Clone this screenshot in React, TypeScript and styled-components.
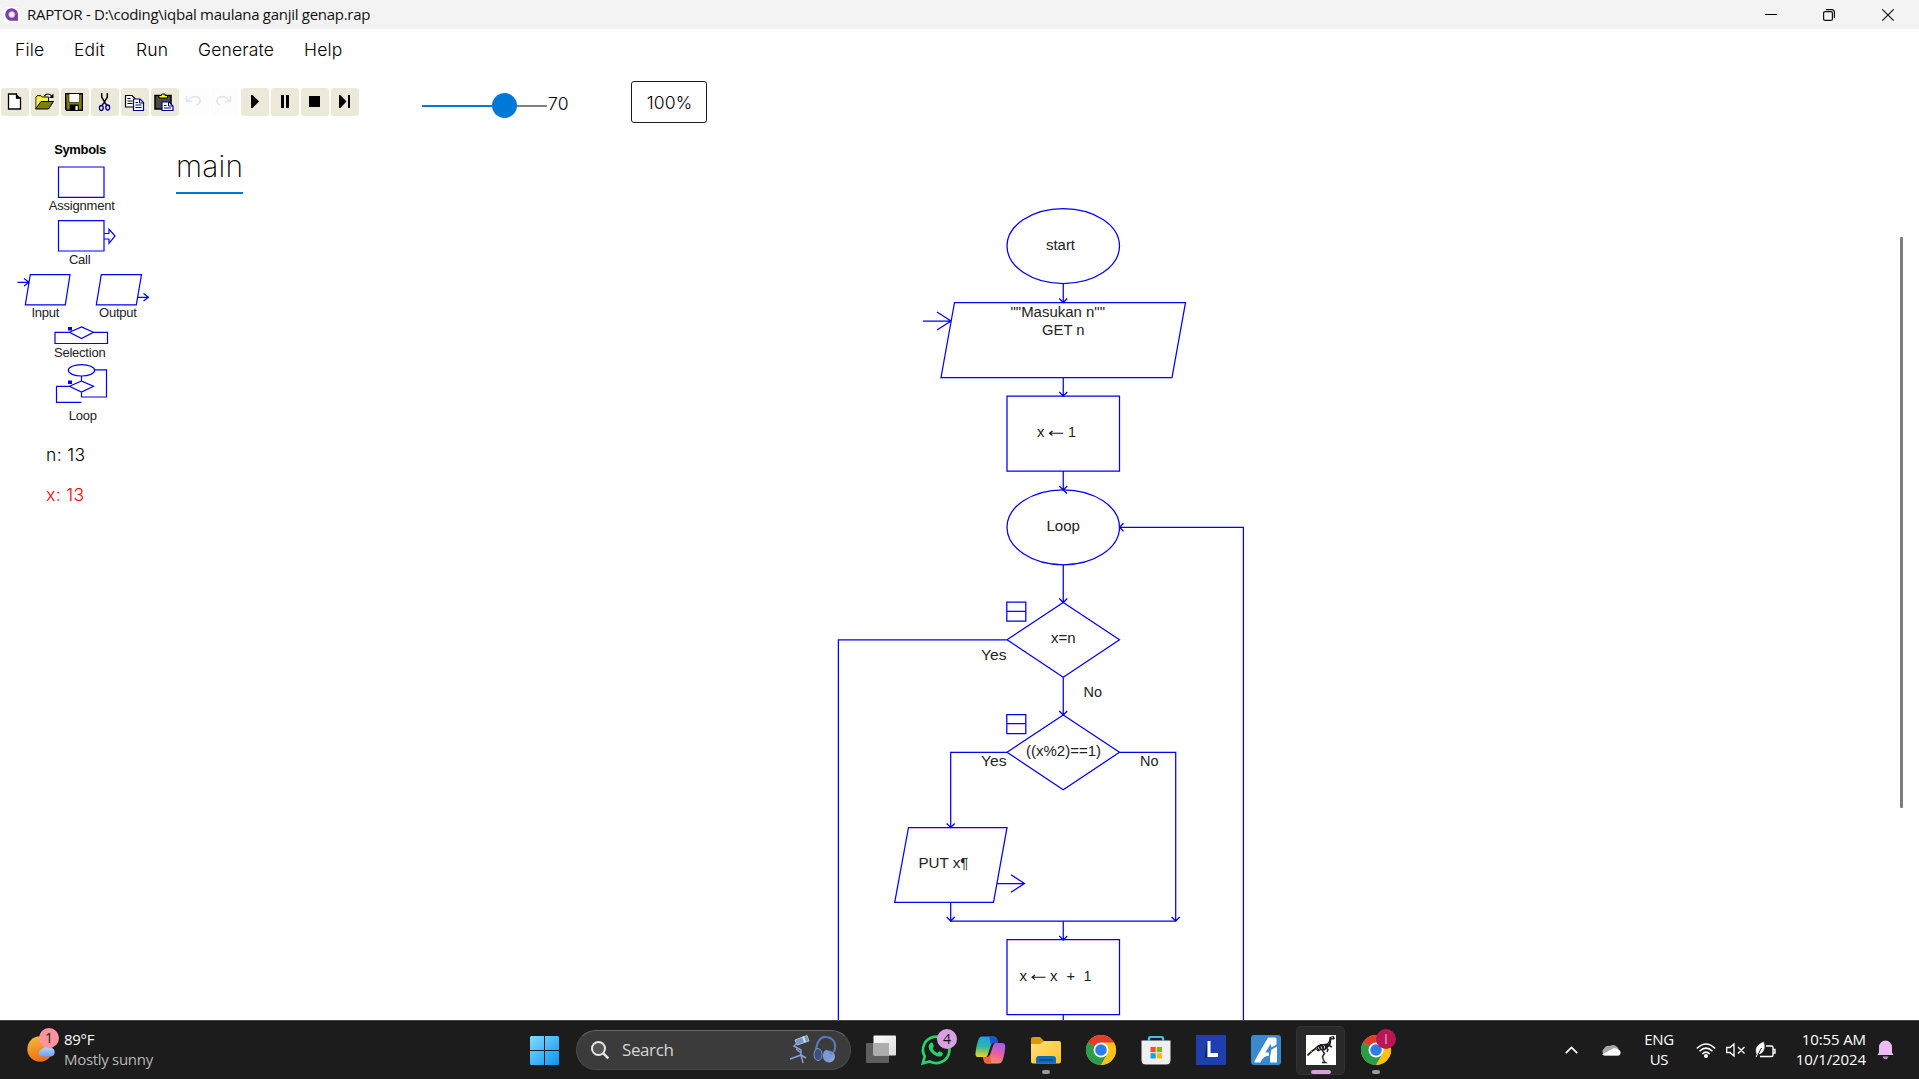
import React from "react";
import styled, { createGlobalStyle } from "styled-components";

const UI = '"Open Sans", "Noto Sans", sans-serif';
const INTER = 'Inter, "Noto Sans", sans-serif';
const ARIAL = '"Liberation Sans", Arial, sans-serif';
const INK = "#0000f5";

const Global = createGlobalStyle`
  html, body { margin: 0; padding: 0; background: #fff; overflow: hidden; }
  * { box-sizing: border-box; }
  svg { display: block; flex: none; overflow: visible; }
`;

const Screen = styled.div`
  display: flex;
  flex-direction: column;
  width: 1919px;
  height: 1079px;
  overflow: hidden;
  background: #fff;
`;

/* ---------- window chrome ---------- */
const TitleBar = styled.header`
  display: flex;
  align-items: center;
  height: 29px;
  flex: none;
  padding: 0 2px 0 4px;
  background: #f3f3f3;
`;
const TitleText = styled.span`
  margin-left: 7px;
  flex: 1;
  font: 15px/28px ${UI};
  height: 29px;
  letter-spacing: -0.28px;
  color: #111;
  white-space: pre;
`;
const CaptionButton = styled.span`
  display: flex;
  align-items: center;
  justify-content: center;
  width: 58.5px;
  height: 28px;
`;
const MenuBar = styled.nav`
  display: flex;
  height: 43px;
  flex: none;
`;
const MenuItem = styled.span<{ $w: number }>`
  width: ${(p) => p.$w}px;
  padding-left: 15px;
  font: 300 17.5px/42px ${INTER};
  letter-spacing: 0.18px;
  color: #000;
`;

/* ---------- toolbar ---------- */
const ToolBar = styled.div`
  display: flex;
  align-items: center;
  height: 60px;
  flex: none;
  padding-left: 1px;
`;
const Tools = styled.div`
  display: flex;
  gap: 2px;
`;
const ToolButton = styled.span<{ $off?: boolean }>`
  width: 28px;
  height: 28px;
  border-radius: 3px;
  background: ${(p) => (p.$off ? "#fdfdfd" : "#ece9d8")};
`;
const Slider = styled.div`
  display: flex;
  align-items: center;
  margin: 7px 0 0 63px;
  height: 25px;
`;
const Track = styled.i<{ $w: number; $c: string }>`
  width: ${(p) => p.$w}px;
  height: 2px;
  background: ${(p) => p.$c};
`;
const Thumb = styled.i`
  width: 25px;
  height: 25px;
  border-radius: 50%;
  background: #0078d7;
`;
const SpeedValue = styled.span`
  width: 84px;
  padding-left: 1px;
  font: 300 17.5px/24px ${INTER};
  letter-spacing: 0.2px;
  color: #000;
  margin-top: 3px;
`;
const ZoomButton = styled.span`
  width: 76px;
  height: 42px;
  border: 1px solid #1a1a1a;
  border-radius: 3px;
  text-align: center;
  font: 300 17.5px/41px ${INTER};
  letter-spacing: 0.1px;
  padding-left: 1px;
  color: #000;
`;

/* ---------- work area ---------- */
const Work = styled.div`
  display: flex;
  flex: 1;
  min-height: 0;
`;
const Side = styled.aside`
  display: flex;
  flex-direction: column;
  width: 160px;
  padding-top: 11px;
  flex: none;
`;
const PaletteTitle = styled.div`
  height: 14px;
  width: 160px;
  text-align: center;
  font: bold 13px/14px ${ARIAL};
  letter-spacing: -0.35px;
  color: #000;
`;
const Caption = styled.span<{ $c: number }>`
  display: block;
  width: ${(p) => p.$c * 2}px;
  text-align: center;
  font: 13px/14px ${ARIAL};
  letter-spacing: -0.22px;
  color: #222;
`;
const PairCaptions = styled.div`
  display: flex;
`;
const Variable = styled.div<{ $hot?: boolean }>`
  padding-left: 46px;
  height: 40px;
  font: 300 17.5px/40px ${INTER};
  letter-spacing: 0.35px;
  color: ${(p) => (p.$hot ? "#f00" : "#000")};
`;
const Watch = styled.div`
  margin-top: 12px;
`;
const Editor = styled.main`
  display: flex;
  flex-direction: column;
  flex: 1;
`;
const Tabs = styled.div`
  display: flex;
  height: 63px;
  padding: 9px 0 0 16px;
`;
const Tab = styled.span`
  height: 53px;
  width: 67px;
  border-bottom: 2px solid #0078d7;
  font: 200 30px/50px ${INTER};
  letter-spacing: 0.2px;
  color: #000;
`;
const CanvasRow = styled.div`
  display: flex;
  flex: 1;
  min-height: 0;
  overflow: hidden;
`;
const ScrollThumb = styled.i`
  width: 2.5px;
  height: 571px;
  margin-top: 42px;
  border-radius: 1px;
  background: #7d7d7d;
`;

/* ---------- taskbar ---------- */
const TaskBar = styled.footer`
  display: flex;
  align-items: center;
  height: 59px;
  flex: none;
  border-top: 1px solid #474747;
  background: #1c1c1c;
  color: #fff;
`;
const Weather = styled.div`
  display: flex;
  width: 517px;
  padding-left: 26px;
  gap: 6px;
`;
const Lines = styled.div<{ $align?: string; $ls?: number; $w?: number }>`
  font: 15px/20px ${UI};
  height: 42px;
  letter-spacing: ${(p) => p.$ls ?? 0}px;
  text-align: ${(p) => p.$align ?? "left"};
  width: ${(p) => (p.$w ? `${p.$w}px` : "auto")};
  white-space: nowrap;
`;
const Muted = styled.div`
  color: #b8b8b8;
`;
const StartCell = styled.span`
  display: flex;
  justify-content: center;
  width: 55px;
`;
const Search = styled.div`
  display: flex;
  align-items: center;
  width: 275px;
  height: 40px;
  margin: 0 2px 0 4px;
  padding-left: 14px;
  border-radius: 20px;
  border: 1px solid #4a4a4a;
  border-top-color: #666;
  background: #3b3b3b;
`;
const SearchText = styled.span`
  flex: 1;
  margin-left: 13px;
  font: 17px/38px ${UI};
  letter-spacing: -0.4px;
  color: #d6d6d6;
`;
const TaskIcon = styled.span<{ $active?: boolean }>`
  position: relative;
  display: flex;
  align-items: center;
  justify-content: center;
  width: 49px;
  height: 49px;
  margin: 0 3px;
  border-radius: 5px;
  border: 1px solid ${(p) => (p.$active ? "#323232" : "transparent")};
  background: ${(p) => (p.$active ? "#292929" : "transparent")};
`;
const Running = styled.i<{ $wide?: boolean }>`
  position: absolute;
  bottom: 0;
  left: ${(p) => (p.$wide ? 14 : 19.5)}px;
  width: ${(p) => (p.$wide ? 20 : 8)}px;
  height: 4px;
  border-radius: 2px;
  background: ${(p) => (p.$wide ? "#d99fe0" : "#9a9a9a")};
`;
const Badge = styled.i<{ $bg: string; $fg: string; $x: number; $y: number }>`
  position: absolute;
  left: ${(p) => p.$x}px;
  top: ${(p) => p.$y}px;
  width: 20px;
  height: 20px;
  border-radius: 50%;
  background: ${(p) => p.$bg};
  color: ${(p) => p.$fg};
  font: normal 14px/20px ${UI};
  text-align: center;
`;
const WeatherIcon = styled.div`
  position: relative;
  width: 32px;
  height: 40px;
`;
const Tray = styled.div`
  display: flex;
  align-items: center;
  margin-left: auto;
  padding-right: 14px;
`;
const TrayItem = styled.span<{ $w: number }>`
  display: flex;
  justify-content: center;
  width: ${(p) => p.$w}px;
`;

/* Toolbar glyphs, each on a 28x28 grid. */
const toolIcons: { off?: boolean; art: React.ReactNode }[] = [
  {
    art: (
      <>
        <path d="M7.500 6h8v4h4v11h-12z" fill="#fff" stroke="#000" strokeWidth="1.300" />
        <path d="M15 5.500l5 5h-5z" fill="#000" />
      </>
    ),
  },
  {
    art: (
      <>
        <path d="M5 20V9l1.300-1.300h3.700L11.300 9H17.500v4.500" fill="#ff0" stroke="#000" />
        <path d="M5.500 9.500h5.500v1h6v3h-6l-5.500 6z" fill="#f2ee5c" />
        <path d="M4.500 21l5.500-7.500H22.500L17.500 21z" fill="#808000" stroke="#000" />
        <path d="M13.500 8q1-2 3.500-2t4 2.500" fill="none" stroke="#000" strokeWidth="1.200" />
        <path d="M22.500 5.500v4.500h-4.500z" fill="#000" />
      </>
    ),
  },
  {
    art: (
      <>
        <path d="M4 5h18v18H5.500L4 21.500z" fill="#000" />
        <path d="M5.300 6.500h2.400V15h10.500V6.500h2.500v15h-3v-5h-9v5h-3z" fill="#808000" />
        <rect x="8.300" y="6" width="9.700" height="8.300" fill="#fff" />
        <rect x="14.500" y="18" width="2.200" height="4" fill="#fff" />
      </>
    ),
  },
  {
    art: (
      <>
        <path d="M10.700 5v4l4 7M16.300 5v4l-4 7" fill="none" stroke="#000" strokeWidth="1.500" />
        <path d="M12.500 15.500l-1.500 2M14.500 15.500l1.500 2" stroke="#000080" strokeWidth="1.300" />
        <ellipse cx="10.300" cy="20" rx="1.900" ry="2.500" fill="none" stroke="#000080" strokeWidth="1.300" />
        <ellipse cx="16.700" cy="19.500" rx="1.900" ry="2.500" fill="none" stroke="#000080" strokeWidth="1.300" />
      </>
    ),
  },
  {
    art: (
      <>
        <path d="M4.500 7.500h6.500l3 3v8.500H4.500z" fill="#fff" stroke="#000" strokeWidth="1.200" />
        <path d="M6.500 10.500h3M6.500 13h5M6.500 15.500h5" stroke="#000" />
        <path d="M12.500 11h6.500l3.500 3.500v8H12.500z" fill="#fff" stroke="#000080" strokeWidth="1.200" />
        <path d="M18.500 11v4h4M14.500 14.500h2.500M14.500 17h6M14.500 19.500h6" fill="none" stroke="#000080" />
      </>
    ),
  },
  {
    art: (
      <>
        <path d="M4 7.500h16V21h-16z" fill="#4c4c40" stroke="#000" strokeWidth="1.500" />
        <path d="M8 10V7.500h2.500V6h3.500v1.500h2.500V10z" fill="#ff0" stroke="#000" />
        <path d="M11 14h7l4 4v4.500h-11z" fill="#fff" stroke="#000080" strokeWidth="1.200" />
        <path d="M17.500 14v4h4.500M13 17.500h2.500M13 20h7" fill="none" stroke="#000080" />
      </>
    ),
  },
  {
    off: true,
    art: (
      <path
        d="M5.500 8v5.500h5.500M6.500 12.500q4-4 7.500-4q5 .5 5 4.500q0 3-3.500 4"
        fill="none"
        stroke="#e4e4f4"
        strokeWidth="1.600"
      />
    ),
  },
  {
    off: true,
    art: (
      <path
        d="M19.500 8v5.500h-5.500M18.500 12.500q-4-4-7.500-4q-5 .5-5 4.500q0 3 3.500 4"
        fill="none"
        stroke="#e4e4f4"
        strokeWidth="1.600"
      />
    ),
  },
  { art: <path d="M10 7h1.500l6.500 6.500L11.500 20H10z" fill="#000" /> },
  { art: <path d="M10 7h3v13h-3zM15 7h3v13h-3z" fill="#000" /> },
  { art: <path d="M8 8h11v11H8z" fill="#000" /> },
  { art: <path d="M8 7h1.300l6.200 6.500L9.300 20H8zM17 7h2v13h-2z" fill="#000" /> },
];

/* Palette figures share one horizontal scale; `top` is where each strip starts. */
const Figure = ({ top, height, d, children }: { top: number; height: number; d: string; children?: React.ReactNode }) => (
  <svg width="160" height={height} viewBox={`0 ${top} 160 ${height}`}>
    <path d={d} fill="none" stroke={INK} strokeWidth="1.200" />
    {children}
  </svg>
);

/* Arrow shaft with a small open head at its lower end. */
const down = (x: number, y1: number, y2: number) => `M${x} ${y1}V${y2}M${x - 4} ${y2 - 4}L${x} ${y2}L${x + 4} ${y2 - 4}`;

type Label = [text: string, x: number, y: number, width: number];
const labels: Label[] = [
  ["start", 1046, 250, 29],
  ['""Masukan n""', 1010.5, 317, 94.5],
  ["GET n", 1042, 335, 42.5],
  ["Loop", 1046.5, 531, 33.5],
  ["x=n", 1051, 643, 24.5],
  ["Yes", 981, 660, 25.5],
  ["No", 1083.5, 697, 18.5],
  ["((x%2)==1)", 1026, 756, 75],
  ["Yes", 981, 766, 25.5],
  ["No", 1140, 766, 18.5],
  ["PUT x¶", 918.5, 868, 50],
  ["x", 1037, 437, 7.5],
  ["1", 1068, 437, 8],
  ["x", 1019.5, 981, 7.5],
  ["x", 1050, 981, 7.5],
  ["+", 1066.5, 981, 8.5],
  ["1", 1083.5, 981, 8],
];
const leftArrow = (x: number, y: number) => `M${x + 13.5} ${y}H${x}M${x + 3} ${y - 2.3}L${x} ${y}L${x + 3} ${y + 2.3}`;

const Flowchart = () => (
  <svg width="1740" height="825" viewBox="160 195 1740 825">
    <g fill="none" stroke={INK} strokeWidth="1.250">
      <ellipse cx="1063.250" cy="246" rx="56.250" ry="37.500" />
      <path d={down(1063.25, 283.5, 302.5)} />
      <path d="M954.500 302.500H1185.500L1172 377.500H941zM923 321H951M937 312L951 321L937 330" />
      <path d={down(1063.25, 377.5, 396)} />
      <path d="M1007 396H1119.500V471H1007z" />
      <path d={down(1063.25, 471, 490)} />
      <path d="M1063.250 490L1067 493.500" />
      <ellipse cx="1063.250" cy="527.250" rx="56.250" ry="37.500" />
      <path d="M1243.400 1020V527.300H1119.500M1123.500 523.300L1119.500 527.300L1123.500 531.300" />
      <path d={down(1063.25, 564.7, 602.5)} />
      <path d="M1063.250 602.500L1119.500 639.800L1063.250 677.200L1007 639.800zM1007 639.800H838.400V1020" />
      <path d="M1006.800 602.200H1025.800V621H1006.800zM1006.800 611.300H1025.800" />
      <path d={down(1063.25, 677.2, 715)} />
      <path d="M1063.250 715L1119.500 752.300L1063.250 789.700L1007 752.300z" />
      <path d="M1006.800 714.700H1025.800V733.500H1006.800zM1006.800 723.500H1025.800" />
      <path d="M1007 752.400H950.700V789M1119.500 752.400H1175.700V789" />
      <path d={down(950.7, 789, 827.5)} />
      <path d={down(1175.7, 789, 921)} />
      <path d="M908.500 827.500H1007L993.500 902.300H894.700zM997 883.500H1024.500M1011 874.800L1024.500 883.500L1011 892.200" />
      <path d={down(950.7, 902.3, 921)} />
      <path d="M950.700 921.200H1175.700" />
      <path d={down(1063.25, 921, 940)} />
      <path d="M1007 939.700H1119.500V1014.700H1007zM1063.250 1014.700V1020" />
    </g>
    <path d={leftArrow(1049.5, 433.3) + leftArrow(1032, 977.3)} fill="none" stroke="#111" strokeWidth="1.100" />
    <g fontFamily={ARIAL} fontSize="15.300" fill="#222">
      {labels.map(([t, x, y, w], i) => (
        <text key={i} x={x} y={y} textLength={w} lengthAdjust="spacingAndGlyphs">
          {t}
        </text>
      ))}
    </g>
  </svg>
);

const Chrome = () => (
  <svg width="30" height="30" viewBox="0 0 48 48">
    <circle cx="24" cy="24" r="24" fill="#fbc116" />
    <path d="M24 24L3.200 12A24 24 0 0 1 44.800 12z" fill="#e33b2e" />
    <path d="M3.200 12A24 24 0 0 0 24 48L34.400 30L24 24z" fill="#2a9c4a" />
    <path d="M24 12H44.800A24 24 0 0 1 24 48L34.400 30z" fill="#fbc116" />
    <circle cx="24" cy="24" r="12" fill="#fff" />
    <circle cx="24" cy="24" r="9.300" fill="#2f7de9" />
  </svg>
);

const HiddenDefs = styled.svg`
  position: absolute;
`;
const Defs = () => (
  <HiddenDefs width="0" height="0">
    <defs>
      <linearGradient id="win" x1="0" y1="0" x2="1" y2="1">
        <stop offset="0" stopColor="#7fdcff" />
        <stop offset="1" stopColor="#0a93f0" />
      </linearGradient>
      <linearGradient id="sun" x1="0.200" y1="0" x2="0.600" y2="1">
        <stop offset="0" stopColor="#f5b83a" />
        <stop offset="1" stopColor="#ee6a12" />
      </linearGradient>
      <linearGradient id="cloud" x1="0" y1="0" x2="0" y2="1">
        <stop offset="0" stopColor="#b9d4fb" />
        <stop offset="1" stopColor="#6f9ff0" />
      </linearGradient>
      <linearGradient id="folder" x1="0" y1="0" x2="1" y2="1">
        <stop offset="0" stopColor="#ffe27a" />
        <stop offset="1" stopColor="#fdbf2d" />
      </linearGradient>
      <linearGradient id="copL" x1="0.400" y1="0" x2="0.300" y2="1">
        <stop offset="0" stopColor="#1e9df2" />
        <stop offset="0.500" stopColor="#2fb7a0" />
        <stop offset="1" stopColor="#f4d21f" />
      </linearGradient>
      <linearGradient id="copR" x1="0.700" y1="0" x2="0.300" y2="1">
        <stop offset="0" stopColor="#a25bf0" />
        <stop offset="0.500" stopColor="#ee5fa0" />
        <stop offset="1" stopColor="#ff9a52" />
      </linearGradient>
      <linearGradient id="view" x1="0" y1="0" x2="1" y2="1">
        <stop offset="0" stopColor="#fff" />
        <stop offset="1" stopColor="#dcdcdc" />
      </linearGradient>
      <linearGradient id="phones" x1="0" y1="0" x2="1" y2="1">
        <stop offset="0" stopColor="#4d6aa8" />
        <stop offset="1" stopColor="#9db8ea" />
      </linearGradient>
    </defs>
  </HiddenDefs>
);

export default function App() {
  return (
    <Screen>
      <Global />
      <Defs />
      <TitleBar>
        <svg width="16" height="16" viewBox="0 0 16 16">
          <rect width="16" height="16" rx="4" fill="#fff" />
          <path d="M7.500 1.200a6.300 6.300 0 1 0 0 12.600H14V7.500A6.400 6.400 0 0 0 7.500 1.200z" fill="#7b3fa6" />
          <circle cx="7.800" cy="7.600" r="3" fill="#f3ecf8" stroke="#c9a9de" strokeWidth="1" />
        </svg>
        <TitleText>RAPTOR - D:\coding\iqbal maulana ganjil genap.rap</TitleText>
        <CaptionButton>
          <svg width="12" height="12">
            <path d="M0 5.500H12" stroke="#000" />
          </svg>
        </CaptionButton>
        <CaptionButton>
          <svg width="12" height="12" fill="none" stroke="#111" strokeWidth="1.200">
            <rect x="0.600" y="2.600" width="8.800" height="8.800" rx="1.500" />
            <path d="M3 0.600H8.500Q11.400 0.600 11.400 3.500V9" />
          </svg>
        </CaptionButton>
        <CaptionButton>
          <svg width="12" height="12">
            <path d="M0.300 0.300L11.700 11.700M11.700 0.300L0.300 11.700" stroke="#111" strokeWidth="1.200" />
          </svg>
        </CaptionButton>
      </TitleBar>
      <MenuBar>
        <MenuItem $w={59}>File</MenuItem>
        <MenuItem $w={62}>Edit</MenuItem>
        <MenuItem $w={62}>Run</MenuItem>
        <MenuItem $w={106}>Generate</MenuItem>
        <MenuItem $w={80}>Help</MenuItem>
      </MenuBar>
      <ToolBar>
        <Tools>
          {toolIcons.map((t, i) => (
            <ToolButton key={i} $off={t.off}>
              <svg width="28" height="28">
                {t.art}
              </svg>
            </ToolButton>
          ))}
        </Tools>
        <Slider>
          <Track $w={70} $c="#0078d7" />
          <Thumb />
          <Track $w={30} $c="#808080" />
        </Slider>
        <SpeedValue>70</SpeedValue>
        <ZoomButton>100%</ZoomButton>
      </ToolBar>
      <Work>
        <Side>
          <PaletteTitle>Symbols</PaletteTitle>
          <Figure top={157} height={42} d="M58.500 167H104V197.300H58.500z" />
          <Caption $c={81.7}>Assignment</Caption>
          <Figure top={213} height={40} d="M58.500 220.700H104V251H58.500zM104 233.500H109V229L115 236L109 243.300V239H104" />
          <Caption $c={79.7}>Call</Caption>
          <Figure
            top={267}
            height={39}
            d="M30.300 274.600H70L65.300 304.800H25.300zM17.500 282.300H29M24 278.500L29 282.300L24 286M101.300 274.600H141.500L136.300 304.800H96.300zM138 297.300H148.500M143.500 293.500L148.500 297.300L143.500 301"
          />
          <PairCaptions>
            <Caption $c={45.3}>Input</Caption>
            <Caption $c={27.3}>Output</Caption>
          </PairCaptions>
          <Figure top={320} height={26} d="M69.500 332.300L81.500 327L93.500 332.300L81.500 338.500zM69.500 332.300H55V343.500H107.500V332.300H93.500">
            <rect x="68" y="327" width="4" height="3.500" fill={INK} />
          </Figure>
          <Caption $c={79.7}>Selection</Caption>
          <Figure
            top={360}
            height={49}
            d="M68.300 370.300a13.200 5.700 0 1 0 26.400 0a13.200 5.700 0 1 0 -26.400 0M94.700 369.800H106.500V397H81.500V392M81.500 376V381L93.500 386.300L81.500 392L69.500 386.300L81.500 381M69.500 386.300H56.500V402.300H81.500"
          >
            <rect x="68" y="380.500" width="4" height="3.500" fill={INK} />
          </Figure>
          <Caption $c={82.7}>Loop</Caption>
          <Watch>
            <Variable>n: 13</Variable>
            <Variable $hot>x: 13</Variable>
          </Watch>
        </Side>
        <Editor>
          <Tabs>
            <Tab>main</Tab>
          </Tabs>
          <CanvasRow>
            <Flowchart />
            <ScrollThumb />
          </CanvasRow>
        </Editor>
      </Work>
      <TaskBar>
        <Weather>
          <WeatherIcon>
            <svg width="32" height="40">
              <circle cx="14" cy="20" r="12.700" fill="url(#sun)" />
              <path d="M15 27.500a4 4 0 0 1 1-7.500a6 5 0 0 1 9-1a4.300 4.300 0 0 1 0 8.500z" fill="url(#cloud)" />
            </svg>
            <Badge $bg="#fd949d" $fg="#222" $x={13} $y={-1}>1</Badge>
          </WeatherIcon>
          <Lines $ls={-0.3}>
            89°F
            <Muted>Mostly sunny</Muted>
          </Lines>
        </Weather>
        <StartCell>
          <svg width="29" height="29">
            <path d="M1 0H14V14H0V1zM15 0H28L29 1V14H15zM0 15H14V29H1L0 28zM15 15H29V28L28 29H15z" fill="url(#win)" />
          </svg>
        </StartCell>
        <Search>
          <svg width="18" height="18" fill="none" stroke="#e6e6e6" strokeWidth="2">
            <circle cx="7.500" cy="7.500" r="6.500" fill="#555" />
            <path d="M12.300 12.300L17.300 17.300" strokeWidth="2.500" />
          </svg>
          <SearchText>Search</SearchText>
          <svg width="61" height="30">
            <g stroke="#8b9fd4" fill="none" strokeWidth="1.500">
              <path d="M6 5L18 0.500L20 6L8 10z" fill="#7e93bf" stroke="#a9bfdc" strokeWidth="1" />
              <path d="M14 1.500L16 7" stroke="#c8e8d8" strokeWidth="2" />
              <path d="M8 8L5 11L12 15V21M12 20L1 24M12 20L17 23M12 20L14 28M7 14L12 18" />
            </g>
            <path d="M27 18C27 6 32 1.500 37 2C45 2.500 48 9 45 17" fill="none" stroke="#5878b4" strokeWidth="2.200" />
            <ellipse cx="29" cy="19.500" rx="4" ry="6" fill="#3d4f7c" stroke="#8198c6" />
            <ellipse cx="40" cy="21.500" rx="6" ry="6" fill="url(#phones)" />
            <ellipse cx="37.500" cy="20.500" rx="3.500" ry="5.500" fill="#7b9ad6" />
          </svg>
        </Search>
        <TaskIcon>
          <svg width="30" height="30">
            <rect x="0" y="8" width="23" height="20" rx="1" fill="#5e5e5e" />
            <rect x="7.500" y="0.500" width="22.500" height="20" rx="1" fill="url(#view)" />
            <path d="M7.500 8H23V20.500H7.500z" fill="#aeaeae" />
          </svg>
        </TaskIcon>
        <TaskIcon>
          <svg width="30" height="30" viewBox="0 0 30 30">
            <path d="M1.800 28.300L3.700 21.400A13.200 13.200 0 1 1 8.700 26.400z" fill="#1c1c1c" stroke="#25d366" strokeWidth="2.700" />
            <path d="M9 8.500c1.500-1.500 2.500-1 3 .5l.8 2c.3.800-1.300 1.900-1.100 2.500c1 2.200 2.700 3.600 4.700 4.400c.7.200 1.600-1.900 2.400-1.500l2.500 1.200c1 .5.300 2.700-.7 3.300c-2 1.300-4.500.7-7.600-1.200c-2.500-1.600-5-4.500-5.300-7.200c-.1-1.500.4-3 1.300-4z" fill="#25d366" />
          </svg>
          <Badge $bg="#d8a0e2" $fg="#111" $x={25} $y={2}>4</Badge>
        </TaskIcon>
        <TaskIcon>
          <svg width="31" height="28" viewBox="0 0 31 28">
            <path d="M7 0.500H19Q21.500 0.500 22 3L23 7H18.500Q16.500 7 16 9L12.500 19.500Q12 21 10 21H3Q0 21 0.500 17Q1.500 8 4 2.500Q5 0.500 7 0.500z" fill="url(#copL)" />
            <path d="M24 27.500H12Q9.500 27.500 9 25L8 21H12.500Q14.500 21 15 19L18.500 8.500Q19 7 21 7H27Q30.500 7 30.300 11Q29.500 20 27 25.500Q26 27.500 24 27.500z" fill="url(#copR)" />
            <path d="M14 .5H19Q21.500 .5 22 3L23 7H18.500Q16.500 7 16 9z" fill="#1957c8" />
            <path d="M8 21H12.500Q14.500 21 15 19L16.500 27.500H12Q9.500 27.500 9 25z" fill="#f4603c" />
          </svg>
        </TaskIcon>
        <TaskIcon>
          <svg width="30" height="28">
            <path d="M0 3Q0 1 2 1H9L12.500 4.500V10H0z" fill="#d99a06" />
            <path d="M0 8H9L13 5H28Q30 5 30 7V25Q30 27.500 28 27.500H2Q0 27.500 0 25z" fill="url(#folder)" />
            <path d="M5 27.500V23Q5 20 8 20H22Q25 20 25 23V27.500z" fill="#0f6cbd" />
            <path d="M8.500 24H22" stroke="#0a4a86" strokeWidth="1.500" />
          </svg>
          <Running />
        </TaskIcon>
        <TaskIcon>
          <Chrome />
        </TaskIcon>
        <TaskIcon>
          <svg width="30" height="30">
            <path d="M8 7V3Q8 2 9 2H21Q22 2 22 3V7" fill="none" stroke="#3cc0f0" strokeWidth="2.200" />
            <path d="M0.500 5.500H29.500V25Q29.500 29.500 25 29.500H5Q0.500 29.500 0.500 25z" fill="#f0f0f0" />
            <path d="M8 6V3.500M22 6V3.500" stroke="#3cc0f0" strokeWidth="2.200" />
            <path d="M9.500 12H14.700V17.200H9.500z" fill="#f25022" />
            <path d="M15.700 12H21V17.200H15.700z" fill="#7fba00" />
            <path d="M9.500 18.200H14.700V23.500H9.500z" fill="#00a4ef" />
            <path d="M15.700 18.200H21V23.500H15.700z" fill="#ffb900" />
          </svg>
        </TaskIcon>
        <TaskIcon>
          <svg width="30" height="30">
            <path d="M0 0H30V30H0z" fill="#1f3fae" />
            <path d="M11 6L8.500 24L11 22z" fill="#0b2a4f" />
            <path d="M11.500 6H14.500V18H22V22H11.500z" fill="#fff" />
          </svg>
        </TaskIcon>
        <TaskIcon>
          <svg width="30" height="30">
            <rect width="30" height="30" rx="3" fill="#3a89cd" />
            <path d="M17 2.500H24Q25.500 2.500 25.500 4V9.500L20.500 12.500L19.500 9L14.500 17.500H18V20.500Q12 21 9.500 27.500H4Q3 27.500 3.500 26z" fill="#fff" />
            <path d="M20.500 14.500L26 11.500V27.500H19V22z" fill="#fff" />
          </svg>
        </TaskIcon>
        <TaskIcon $active>
          <svg width="30" height="30">
            <path d="M0 0H30V30H0z" fill="#fff" />
            <path d="M1.500 20.500Q5 16.500 9 14Q12 10.500 16 9.500" fill="none" stroke="#1a1a1a" strokeWidth="1.800" />
            <path d="M9 13.500Q12 9 17.500 9L21 8.500L23 6L23.500 2L27.500 1L29 3.500L28 4.500H25.500L24.500 10L21.500 13L18.500 15.500L15 15L12 16.500z" fill="#1f1a22" />
            <path d="M16 15L18.500 18.500L16.500 21.500L18 26.500L19.500 27.500H16M20 13L22 14.500L21 17M23 10.500L26 12" fill="none" stroke="#2a2030" strokeWidth="1.500" />
            <path d="M12 12L13.500 14.500M15 11.500L16 14M18.500 11V13.500M25.300 2.800H27" stroke="#ccc" />
            <path d="M10 13L11 14.500M17 22.500V24.500M5 17L6 16" stroke="#8c8a3a" />
            <path d="M17 10.500H18.500M17.500 25.500V27M22.500 8V9" stroke="#a64fb0" />
          </svg>
          <Running $wide />
        </TaskIcon>
        <TaskIcon>
          <Chrome />
          <Badge $bg="#b81657" $fg="#e9a0bf" $x={24} $y={2}>I</Badge>
          <Running />
        </TaskIcon>
        <Tray>
          <TrayItem $w={38}>
            <svg width="13" height="8">
              <path d="M0.800 7.200L6.500 1.500L12.200 7.200" fill="none" stroke="#fff" strokeWidth="1.700" />
            </svg>
          </TrayItem>
          <TrayItem $w={42}>
            <svg width="21" height="14">
              <path d="M4 12.500a4 4 0 0 1-1-7a5 5 0 0 1 6-2.500a6 6 0 0 1 9 4a3 3 0 0 1 0 5.500z" fill="#a8a8a8" />
              <path d="M1 11.500L12 5.500a5 5 0 0 1 5 1a3.200 3.200 0 0 1 .3 6H3z" fill="#fff" />
            </svg>
          </TrayItem>
          <Lines $align="center" $w={54} $ls={-0.3}>
            ENG
            <br />
            US
          </Lines>
          <TrayItem $w={40}>
            <svg width="20" height="15" fill="none" stroke="#fff" strokeWidth="1.500">
              <path d="M0.800 5.500Q10-3.500 19.200 5.500M3.500 8.300Q10 2 16.500 8.300M6.200 11Q10 7.300 13.800 11" />
              <circle cx="10" cy="13" r="1.300" fill="#fff" />
            </svg>
          </TrayItem>
          <TrayItem $w={20}>
            <svg width="20" height="14" fill="none" stroke="#fff" strokeWidth="1.300">
              <path d="M0.700 4.500H4L8 1V13L4 9.500H0.700zM12 4L18.500 10.500M18.500 4L12 10.500" />
            </svg>
          </TrayItem>
          <TrayItem $w={39}>
            <svg width="21" height="17" fill="none" stroke="#fff" strokeWidth="1.400">
              <path d="M11 4H16.500Q18 4 18 5.500V13Q18 14.500 16.500 14.500H5M18.500 7.500H20V11H18.500" />
              <path d="M1.500 11.500Q-1 4 8.500 0Q11 7 6.500 11Q4 12.500 1.500 11.500z" fill="#fff" strokeWidth="0.500" />
              <path d="M2.500 13.500L6.500 6" stroke="#1c1c1c" strokeWidth="1" />
              <path d="M1 15L2.500 12" strokeWidth="1" />
            </svg>
          </TrayItem>
          <Lines $align="right" $w={81} $ls={-0.1}>
            10:55 AM
            <br />
            10/1/2024
          </Lines>
          <TrayItem $w={39}>
            <svg width="17" height="20">
              <path d="M0.500 15L2 12.500V7a6.500 6.500 0 0 1 13 0v5.500L16.500 15z" fill="#ecbcf2" />
              <path d="M5.500 16.500H11.500Q10.500 19.300 8.500 19.300Q6.500 19.300 5.500 16.500z" fill="#b58bbb" />
            </svg>
          </TrayItem>
        </Tray>
      </TaskBar>
    </Screen>
  );
}
